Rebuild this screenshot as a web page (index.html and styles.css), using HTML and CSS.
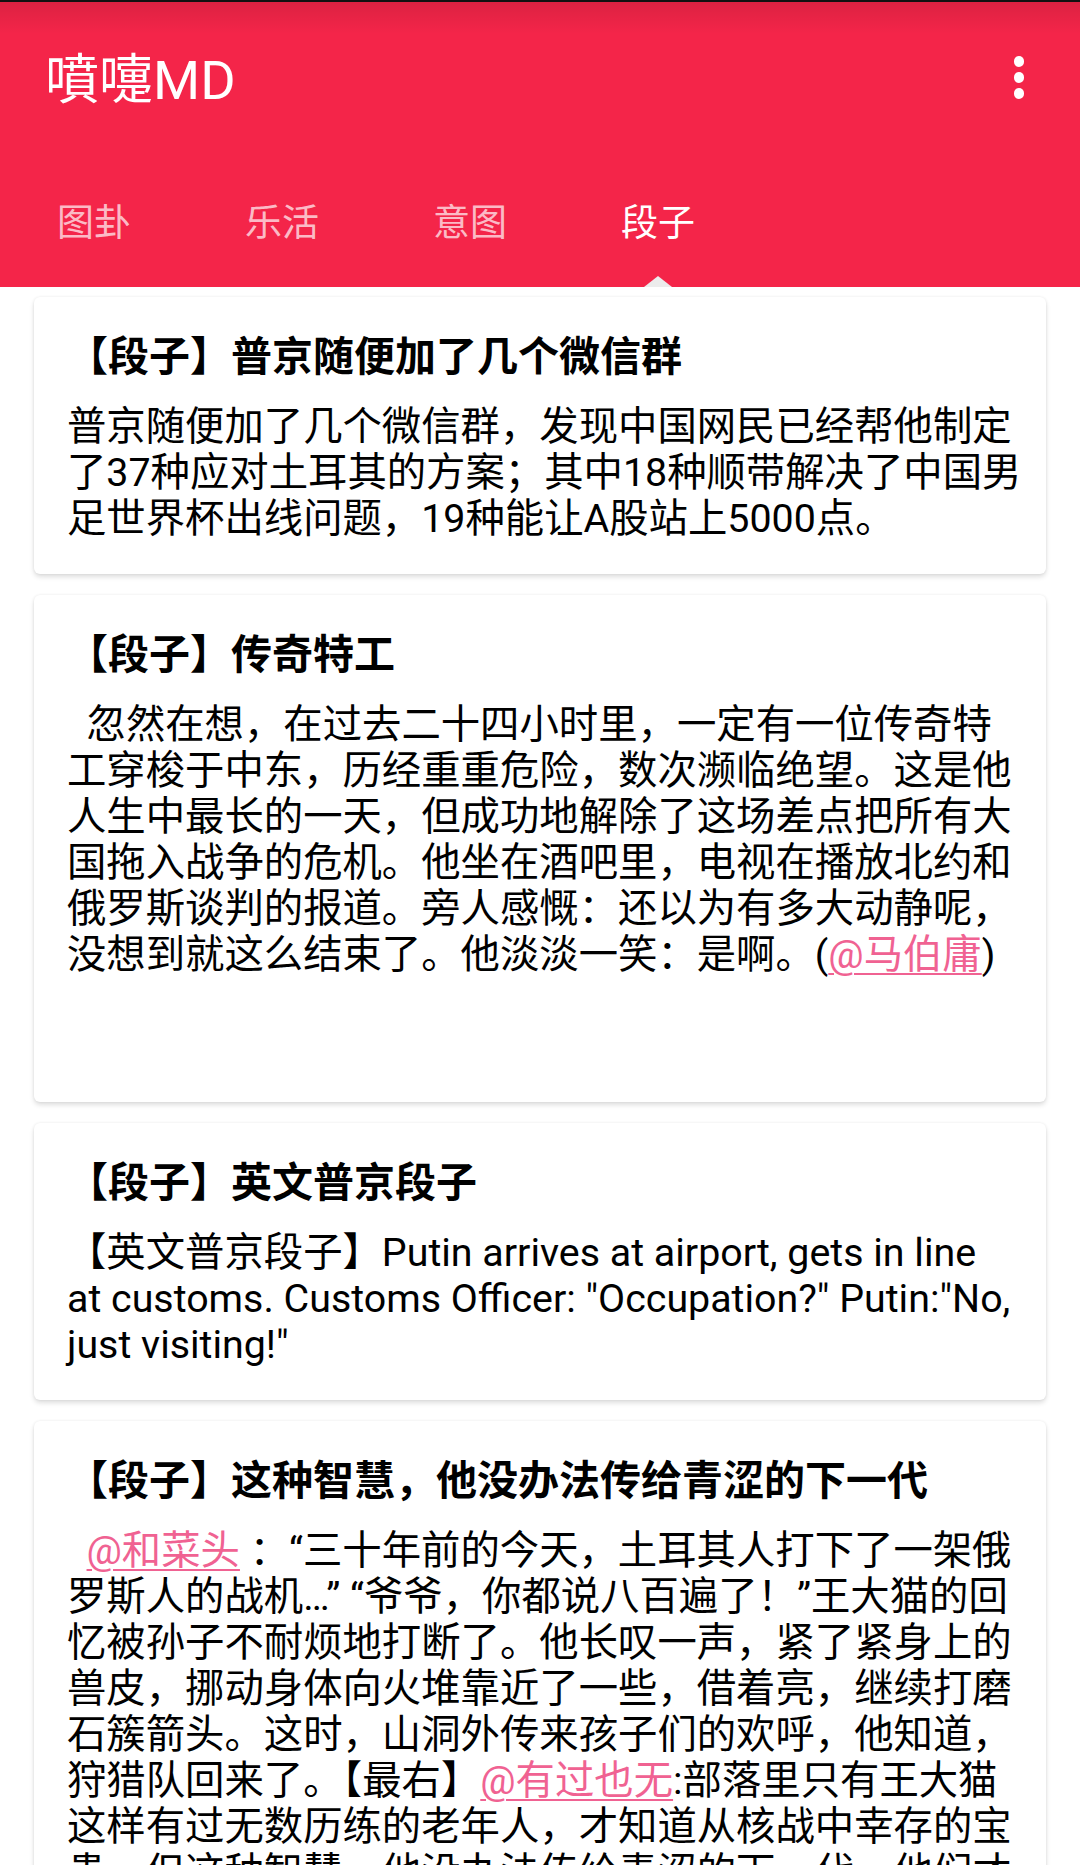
FILE: index.html
```html
<!DOCTYPE html>
<html lang="zh-CN">
<head>
<meta charset="utf-8">
<title>噴嚏MD</title>
<link rel="stylesheet" href="styles.css">
</head>
<body>
<header class="appbar">
  <div class="toolbar">
    <h1 class="toolbar-title">噴嚏MD</h1>
    <button class="overflow" aria-label="更多"><span class="dot"></span><span class="dot"></span><span class="dot"></span></button>
  </div>
  <nav class="tabs">
    <a class="tab">图卦</a>
    <a class="tab">乐活</a>
    <a class="tab">意图</a>
    <a class="tab tab-active">段子</a>
  </nav>
</header>
<main class="list">
  <article class="card">
    <h2 class="card-title">【段子】普京随便加了几个微信群</h2>
    <p class="card-body">普京随便加了几个微信群，发现中国网民已经帮他制定了37种应对土耳其的方案；其中18种顺带解决了中国男足世界杯出线问题，19种能让A股站上5000点。</p>
  </article>
  <article class="card">
    <h2 class="card-title">【段子】传奇特工</h2>
    <p class="card-body">&nbsp;&nbsp;忽然在想，在过去二十四小时里，一定有一位传奇特工穿梭于中东，历经重重危险，数次濒临绝望。这是他人生中最长的一天，但成功地解除了这场差点把所有大国拖入战争的危机。他坐在酒吧里，电视在播放北约和俄罗斯谈判的报道。旁人感慨：还以为有多大动静呢，没想到就这么结束了。他淡淡一笑：是啊。(<a class="mention">@马伯庸</a>)<br><br><br></p>
  </article>
  <article class="card">
    <h2 class="card-title">【段子】英文普京段子</h2>
    <p class="card-body">【英文普京段子】Putin arrives at airport, gets in line<br>at customs. Customs Officer: "Occupation?" Putin:"No, just visiting!"</p>
  </article>
  <article class="card">
    <h2 class="card-title">【段子】这种智慧，他没办法传给青涩的下一代</h2>
    <p class="card-body">&nbsp;&nbsp;<a class="mention">@和菜头</a> ：“三十年前的今天，土耳其人打下了一架俄罗斯人的战机…” “爷爷，你都说八百遍了！”王大猫的回忆被孙子不耐烦地打断了。他长叹一声，紧了紧身上的兽皮，挪动身体向火堆靠近了一些，借着亮，继续打磨石簇箭头。这时，山洞外传来孩子们的欢呼，他知道，狩猎队回来了。【最右】<a class="mention">@有过也无</a>:部落里只有王大猫这样有过无数历练的老年人，才知道从核战中幸存的宝贵，但这种智慧，他没办法传给青涩的下一代，他们才刚刚学会在废墟里生存。</p>
  </article>
</main>
</body>
</html>
```

FILE: styles.css
```css
* {
  box-sizing: border-box;
}

html, body {
  margin: 0;
  padding: 0;
  background: #ffffff;
  font-family: Roboto, "Noto Sans CJK SC", sans-serif;
  color: #000000;
}

.appbar {
  position: relative;
  background: #f42549;
  height: 287px;
}

.appbar::before {
  content: "";
  position: absolute;
  left: 0;
  right: 0;
  top: 0;
  height: 32px;
  border-top: 2px solid #111;
  background: linear-gradient(rgba(0, 0, 0, 0.1), rgba(0, 0, 0, 0.06) 40%, rgba(0, 0, 0, 0));
  pointer-events: none;
}

.toolbar {
  height: 161px;
  display: flex;
  align-items: center;
  justify-content: space-between;
  padding: 0 56px 0 45px;
}

.toolbar-title {
  margin: 0;
  font-size: 54px;
  font-weight: 400;
  color: #ffffff;
  line-height: 1;
}

.overflow {
  display: flex;
  flex-direction: column;
  gap: 5.5px;
  padding: 0;
  border: 0;
  background: none;
  margin: 0 0 6px;
}

.dot {
  display: block;
  width: 10.5px;
  height: 10.5px;
  border-radius: 50%;
  background: #ffffff;
}

.tabs {
  display: flex;
  height: 126px;
}

.tab {
  position: relative;
  width: 188px;
  display: flex;
  align-items: center;
  justify-content: center;
  font-size: 37px;
  color: rgba(255, 255, 255, 0.7);
  padding-bottom: 8px;
}

.tab-active {
  color: #ffffff;
}

.tab-active::after {
  content: "";
  position: absolute;
  left: 50%;
  bottom: 0;
  margin-left: -14px;
  border-left: 14px solid transparent;
  border-right: 14px solid transparent;
  border-bottom: 11px solid #ececec;
}

.list {
  display: flex;
  flex-direction: column;
  gap: 21px;
  padding: 10px 34px 40px;
}

.card {
  background: #ffffff;
  border-radius: 6px;
  box-shadow: 0 3px 5px rgba(0, 0, 0, 0.13), 0 0 3px rgba(0, 0, 0, 0.07);
  padding: 32px 20px 32px 33px;
}

.card-title {
  margin: 0;
  font-size: 41px;
  font-weight: 700;
  line-height: 56px;
}

.card-body {
  margin: 19px 0 0;
  font-size: 39.375px;
  line-height: 46px;
}

.mention {
  color: #f06292;
  text-decoration: underline;
  text-decoration-thickness: 2px;
  text-underline-offset: 5px;
}
```
